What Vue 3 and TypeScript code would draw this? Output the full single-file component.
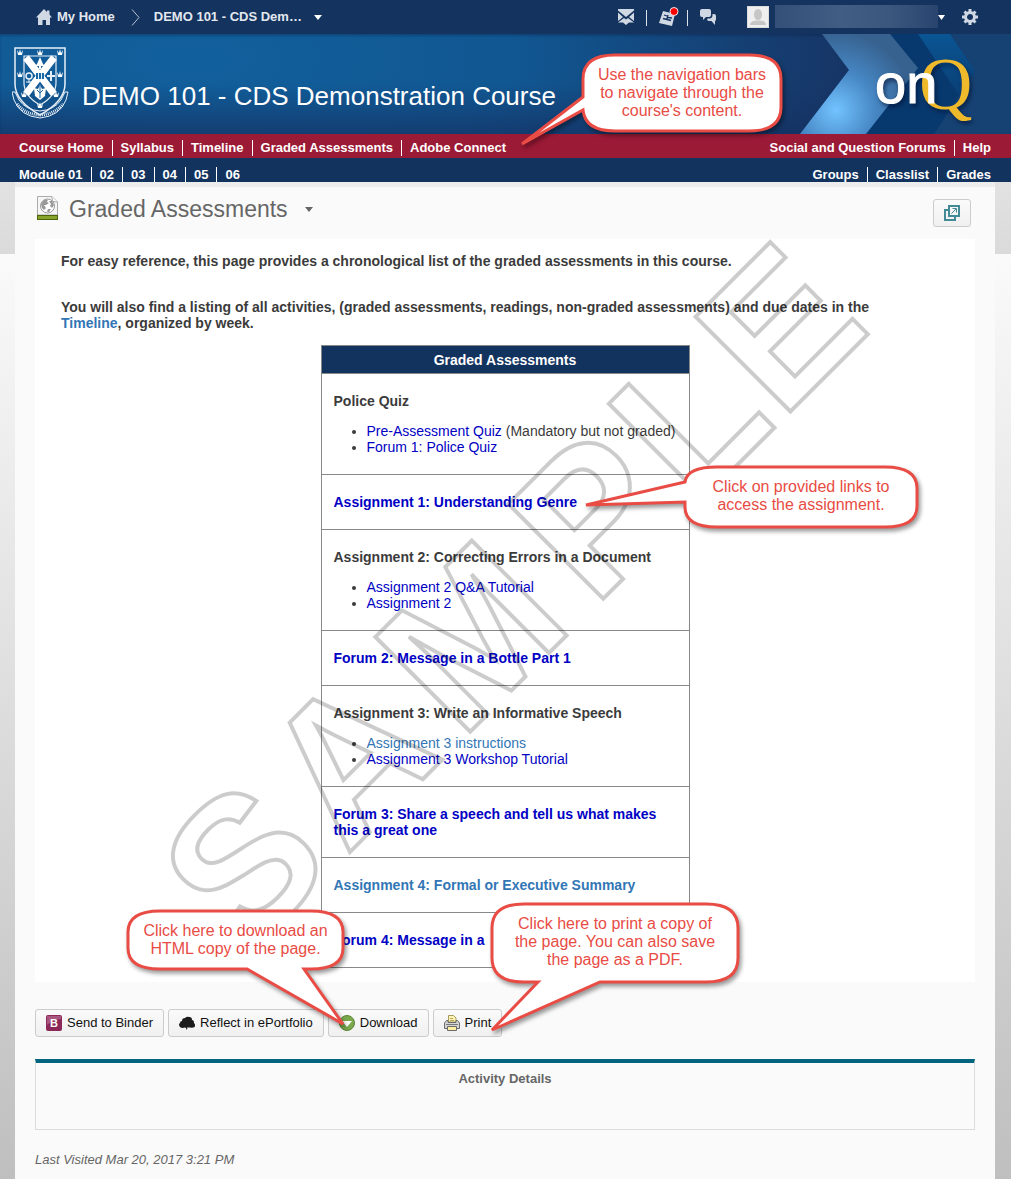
<script setup lang="ts">
interface ListEntry { label: string; tone?: string; note?: string }
interface Row { title: string; link?: string; items?: ListEntry[] }

const leftLinks: string[] = ['Course Home', 'Syllabus', 'Timeline', 'Graded Assessments', 'Adobe Connect']
const rightLinks: string[] = ['Social and Question Forums', 'Help']
const moduleLinks: string[] = ['Module 01', '02', '03', '04', '05', '06']
const toolLinks: string[] = ['Groups', 'Classlist', 'Grades']

const rows: Row[] = [
  {
    title: 'Police Quiz',
    items: [
      { label: 'Pre-Assessment Quiz', tone: 'navy', note: '(Mandatory but not graded)' },
      { label: 'Forum 1: Police Quiz', tone: 'navy' },
    ],
  },
  { title: 'Assignment 1: Understanding Genre', link: 'navy' },
  {
    title: 'Assignment 2: Correcting Errors in a Document',
    items: [
      { label: 'Assignment 2 Q&A Tutorial', tone: 'navy' },
      { label: 'Assignment 2', tone: 'navy' },
    ],
  },
  { title: 'Forum 2: Message in a Bottle Part 1', link: 'navy' },
  {
    title: 'Assignment 3: Write an Informative Speech',
    items: [
      { label: 'Assignment 3 instructions', tone: 'sky' },
      { label: 'Assignment 3 Workshop Tutorial', tone: 'navy' },
    ],
  },
  { title: 'Forum 3: Share a speech and tell us what makes this a great one', link: 'navy' },
  { title: 'Assignment 4: Formal or Executive Summary', link: 'sky' },
  { title: 'Forum 4: Message in a', link: 'navy' },
]
</script>

<template>
  <div class="page">
    <header>
      <div class="topbar">
        <a class="home" href="#">
          <svg width="16" height="16" viewBox="0 0 16 16" aria-hidden="true">
            <path fill="#d0d8e3" d="M8 0 L11 3 V1.500 H13.500 V5.500 L16 8.500 H14 V16 H10 V11 H6.500 V16 H2 V8.500 H0 Z" />
          </svg>
          <span>My Home</span>
        </a>
        <svg class="crumb" width="9" height="17" viewBox="0 0 9 17" aria-hidden="true">
          <path d="M1 .5 L8 8.500 L1 16.500" fill="none" stroke="#b4c0d0" />
        </svg>
        <button class="course-pick" type="button">
          <span>DEMO 101 - CDS Dem…</span>
          <svg width="8" height="5" viewBox="0 0 8 5" aria-hidden="true"><path d="M0 0H8L4 5Z" fill="#fff" /></svg>
        </button>
        <div class="alerts">
          <button type="button" aria-label="Messages">
            <svg width="16" height="16" viewBox="0 0 16 16">
              <path fill="#d0d8e3" d="M0 0H16V1.500L8 8 0 1.500Z M0 3.500 5 8 0 12Z M16 3.500 11 8 16 12Z M0 13.500 6 9 8 10.500 10 9 16 13.500H11L8 16 5 13.500Z" />
            </svg>
          </button>
          <i class="rule"></i>
          <button type="button" aria-label="Updates" class="updates">
            <svg width="20" height="20" viewBox="0 0 20 20">
              <path fill="#d0d8e3" d="M4 4 L16 7 L13 19 L0 16 Z" />
              <path fill="none" stroke="#14335f" stroke-width="1.300" d="M5 8 8 9 M4 11.500 12 13.500 M9 8 8 12 M9 10.500 13 11" />
              <circle cx="15" cy="4.500" r="4" fill="#f00" stroke="#e8edf3" />
            </svg>
          </button>
          <i class="rule"></i>
          <button type="button" aria-label="Discussions">
            <svg width="16" height="16" viewBox="0 0 16 16">
              <path fill="#d0d8e3" d="M2 0H9Q11 0 11 2V6Q11 8 9 8H6L3 11V8H2Q0 8 0 6V2Q0 0 2 0Z M12.500 5H14Q16 5 16 7V10Q16 12 15 12V16L11.500 12H9Q7 12 7 10L8 9.500H10Q12.500 9 12.500 6Z" />
            </svg>
          </button>
        </div>
        <button class="user" type="button" aria-label="Account">
          <svg width="22" height="22" viewBox="0 0 22 22">
            <rect x=".5" y=".5" width="21" height="21" fill="#efefef" stroke="#dcdcdc" />
            <ellipse cx="11" cy="8.500" rx="4" ry="5.500" fill="#c6c6c6" />
            <path fill="#c6c6c6" d="M3 19Q3 15 9 14.500H13Q19 15 19 19Z" />
          </svg>
          <span class="name"></span>
          <svg width="7" height="5" viewBox="0 0 7 5"><path d="M0 0H7L3.500 5Z" fill="#fff" /></svg>
        </button>
        <button class="gear" type="button" aria-label="Settings">
          <svg width="16" height="16" viewBox="0 0 16 16">
            <circle cx="8" cy="8" r="4.500" fill="none" stroke="#d0d8e3" stroke-width="3" />
            <path stroke="#d0d8e3" stroke-width="3" d="M8 0V3M8 13V16M0 8H3M13 8H16M2.500 2.500 4.500 4.500M11.500 11.500 13.500 13.500M13.500 2.500 11.500 4.500M4.500 11.500 2.500 13.500" />
          </svg>
        </button>
      </div>

      <div class="banner">
        <svg class="crest" width="58" height="74" viewBox="0 0 58 74" aria-hidden="true">
          <g fill="none" stroke="#e6eff8">
            <path stroke-width="1.500" d="M3 2H53V38Q53 55 28 69Q3 55 3 38Z" />
            <path stroke-width="1.200" d="M12 10H44V37Q44 50 28 59Q12 50 12 37Z" />
            <path d="M3 46 H0 L2 54 Q8 70 28 72 Q48 70 54 54 L56 46 H53 M3 46 L7 54 Q14 64 28 65 Q42 64 49 54 L53 46" />
            <path stroke-width="3" stroke-dasharray="1 1" d="M5 58Q13 68 28 69Q43 68 51 58" />
            <circle cx="17" cy="30" r="3" stroke-width="1.500" />
            <path stroke-width="2" d="M39 25V35M35 30H43" />
            <path d="M17 33V37M14 36H20" />
          </g>
          <path stroke="#fff" stroke-width="7" d="M14 11.500 42 48M42 11.500 14 48" />
          <path fill="#1768a8" d="M24 27H32V33H24Z" />
          <path fill="none" stroke="#e6eff8" d="M26.500 27V33M29.500 27V33" />
          <g fill="#fff">
            <path d="M28 11 31 18 33 20H29V23H27V20H23L25 18Z" />
            <path d="M28 39 30 43 34 42 33 50 28 54 23 50 22 42 26 43Z" />
            <path d="M5 4 7 7 8 3 9 7 11 4 10 9H6Z M25 4 27 7 28 3 29 7 31 4 30 9H26Z M45 4 47 7 48 3 49 7 51 4 50 9H46Z" />
            <path d="M5 26 7 29 8 25 9 29 11 26 10 31H6Z M45 26 47 29 48 25 49 29 51 26 50 31H46Z" />
            <path d="M9 46 11 49 12 45 13 49 15 46 14 51H10Z M41 46 43 49 44 45 45 49 47 46 46 51H42Z M25 57 27 60 28 56 29 60 31 57 30 62H26Z" />
          </g>
          <path stroke="#1768a8" fill="none" d="M28 40V52M25 44 28 47 31 44" />
        </svg>
        <h1>DEMO 101 - CDS Demonstration Course</h1>
        <svg class="brand" width="211" height="100" viewBox="0 0 211 100" role="img" aria-label="onQ">
          <defs>
            <radialGradient id="glow" gradientUnits="userSpaceOnUse" cx="36" cy="76" r="78">
              <stop offset="0" stop-color="#72c3ff" /><stop offset=".5" stop-color="#4687c4" /><stop offset="1" stop-color="#376290" />
            </radialGradient>
            <linearGradient id="edge" x1="0" y1="0" x2="0" y2="1">
              <stop offset="0" stop-color="#0a5594" /><stop offset="1" stop-color="#0a3f75" />
            </linearGradient>
          </defs>
          <path fill="#164273" d="M120 0H211V100H120Z" />
          <path fill="#08396e" d="M90 0H150L175 37 134 100H66Z" />
          <path fill="url(#edge)" d="M118 0H150L175 37 159 61Z" />
          <path fill="url(#glow)" d="M22 0H90L118 34 66 100H0L49 36Z" />
          <g class="shade">
            <text class="q" x="119" y="75">Q</text>
            <text class="on" x="75" y="69">on</text>
          </g>
        </svg>
      </div>

      <nav class="nav red" aria-label="Course">
        <ul><li v-for="l in leftLinks" :key="l"><a href="#">{{ l }}</a></li></ul>
        <ul><li v-for="l in rightLinks" :key="l"><a href="#">{{ l }}</a></li></ul>
      </nav>
      <nav class="nav blue" aria-label="Modules">
        <ul><li v-for="l in moduleLinks" :key="l"><a href="#">{{ l }}</a></li></ul>
        <ul><li v-for="l in toolLinks" :key="l"><a href="#">{{ l }}</a></li></ul>
      </nav>
    </header>

    <div class="backdrop">
      <main>
        <div class="heading">
          <svg width="22" height="26" viewBox="0 0 22 26" aria-hidden="true">
            <path d="M.5 .5H15L20.500 6V19H.5Z" fill="#f6f6f6" stroke="#aaa" />
            <path d="M14.500 .5 16 5.500 20.500 6" fill="#fff" stroke="#aaa" />
            <circle cx="10.500" cy="10" r="7" fill="#fff" stroke="#999" />
            <path fill="#999" d="M4 8 7 4 11 3.500 10 6 12 7 9 9 7 9 9 12 7 14 5 12Z M12 5 15 5 17 9 15 12 13 10 14 8Z M11 13 14 13 12 16 10 16Z" />
            <rect x=".5" y="19.500" width="20" height="4" fill="#86a32c" stroke="#4c6609" />
          </svg>
          <h2>Graded Assessments</h2>
          <svg width="8" height="5" viewBox="0 0 8 5" aria-hidden="true"><path d="M0 0H8L4 5Z" fill="#666" /></svg>
          <button class="btn popout" type="button" aria-label="Open in new window">
            <svg width="16" height="16" viewBox="0 0 16 16">
              <path fill="none" stroke="#438a97" stroke-width="2" d="M5 1H15V11H5Z M4 5H1V15H11V12" />
              <path fill="none" stroke="#438a97" d="M7.500 8.500 12 4M8.500 3.500H12.500V7.500" />
            </svg>
          </button>
        </div>

        <section class="content">
          <p>For easy reference, this page provides a chronological list of the graded assessments in this course.</p>
          <p class="second">You will also find a listing of all activities, (graded assessments, readings, non-graded assessments) and due dates in the <a class="sky" href="#">Timeline</a>, organized by week.</p>
          <table>
            <thead><tr><th scope="col">Graded Assessments</th></tr></thead>
            <tbody>
              <tr v-for="r in rows" :key="r.title">
                <td>
                  <strong><a v-if="r.link" href="#" :class="r.link">{{ r.title }}</a><template v-else>{{ r.title }}</template></strong>
                  <ul v-if="r.items">
                    <li v-for="i in r.items" :key="i.label"><a href="#" :class="i.tone">{{ i.label }}</a>{{ i.note ? ' ' + i.note : '' }}</li>
                  </ul>
                </td>
              </tr>
            </tbody>
          </table>
        </section>

        <div class="actions">
          <button class="btn" type="button">
            <svg width="16" height="16" viewBox="0 0 16 16" aria-hidden="true">
              <rect width="16" height="16" rx="2" fill="#8b2858" /><path fill="#a85780" d="M1 1H15V4Q7 4 1 10Z" />
              <text class="b" x="8" y="12" text-anchor="middle">B</text>
            </svg><span>Send to Binder</span>
          </button>
          <button class="btn" type="button">
            <svg width="16" height="16" viewBox="0 0 16 16" aria-hidden="true">
              <path fill="#1b1b1b" d="M3 6Q3 3 6 3Q8 1 10.500 2Q13 2 13 5Q15 5 15 8Q17 10 15.500 12Q14 13 11 12.500L8 12.500Q9 14 7 15Q8 13 6 12.500Q3 13.500 1 12Q-1 9 1 8Q1 6 3 6Z" />
            </svg><span>Reflect in ePortfolio</span>
          </button>
          <button class="btn" type="button">
            <svg width="16" height="16" viewBox="0 0 16 16" aria-hidden="true">
              <circle cx="8" cy="8" r="7.500" fill="#79a94c" stroke="#5c8537" /><path fill="#fff" d="M3 6H13L8 12Z" />
            </svg><span>Download</span>
          </button>
          <button class="btn" type="button">
            <svg width="16" height="16" viewBox="0 0 16 16" aria-hidden="true">
              <path fill="#fdf3b4" stroke="#a89a5c" d="M4.500 7V.5H9.500L12 3V7Z" /><path stroke="#b7a85e" d="M6 3.500H9M6 5.500H10" />
              <path fill="#d6d6d6" stroke="#6b6b6b" d="M2.500 5.500H4V7.500H12V5.500H13.500L15.500 8V13.500H.5V8Z" />
              <path stroke="#777" d="M2 9.500H14" /><path fill="#fdf0a0" stroke="#6b6b6b" d="M3.500 11.500H12.500V15.500H3.500Z" />
            </svg><span>Print</span>
          </button>
        </div>

        <section class="activity"><h3>Activity Details</h3></section>
        <p class="visited">Last Visited Mar 20, 2017 3:21 PM</p>
      </main>
    </div>

    <svg class="watermark" width="1011" height="1179" viewBox="0 0 1011 1179" aria-hidden="true">
      <text transform="rotate(-45)" x="-504 -360 -198 -10 132 255" y="850">SAMPLE</text>
    </svg>

    <aside class="callout c1">
      <svg width="202" height="80"><path d="M34 2H168Q200 2 200 26V54Q200 78 168 78H34Q4 78 2 57L-59 91 2 44V26Q2 2 34 2Z" /></svg>
      <p>Use the navigation bars<br>to navigate through the<br>course's content.</p>
    </aside>
    <aside class="callout c2">
      <svg width="236" height="64"><path d="M34 2H202Q234 2 234 23V41Q234 62 202 62H34Q2 62 2 42V37L-97 40 2 17Q4 2 34 2Z" /></svg>
      <p>Click on provided links to<br>access the assignment.</p>
    </aside>
    <aside class="callout c3">
      <svg width="219" height="62"><path d="M34 2H185Q217 2 217 23V39Q217 60 185 60H178L217 115 121 60H34Q2 60 2 39V23Q2 2 34 2Z" /></svg>
      <p>Click here to download an<br>HTML copy of the page.</p>
    </aside>
    <aside class="callout c4">
      <svg width="250" height="82"><path d="M34 2H216Q248 2 248 26V56Q248 80 216 80H110L2 128 48 80H34Q2 80 2 56V26Q2 2 34 2Z" /></svg>
      <p>Click here to print a copy of<br>the page. You can also save<br>the page as a PDF.</p>
    </aside>
  </div>
</template>

<style>
body { margin: 0; }
</style>

<style scoped>
.page {
  position: relative;
  overflow: hidden;
  font-family: "Liberation Sans", Arial, sans-serif;
  font-size: 13px;
  color: #3b3b3b;
}
a { text-decoration: none; color: inherit; }
ul { list-style: none; margin: 0; padding: 0; }
svg { display: block; flex: none; }
button { font: inherit; color: inherit; border: 0; background: none; padding: 0; cursor: pointer; }

.topbar {
  display: flex;
  align-items: center;
  height: 34px;
  padding: 0 33px 0 36px;
  background: #14335f;
  color: #e3e8ef;
  font-weight: bold;
}
.home { display: flex; align-items: center; gap: 5px; }
.crumb { margin: 0 14px 0 16px; }
.course-pick { display: flex; align-items: center; gap: 12px; }
.topbar span { padding-bottom: 1px; }
.alerts { display: flex; align-items: center; gap: 12px; margin-left: auto; }
.updates { margin-right: -4px; }
.rule { width: 1px; height: 16px; margin-top: 2px; background: #dde3ea; }
.user { display: flex; align-items: center; margin-left: 31px; }
.name { width: 163px; height: 22px; margin: 0 0 2px 6px; background: linear-gradient(90deg, #344f78, #425d84 40%, #3c577e 70%, #29456f); }
.gear { margin-left: 17px; }

.banner {
  display: flex;
  height: 100px;
  background:
    linear-gradient(180deg, transparent 50%, rgba(20, 50, 100, 0.700)),
    radial-gradient(ellipse 720px 260px at 190px 25px, #11609d, #115792 45%, #163a6c 85%, #162f5e);
  box-shadow: inset 0 2px 2px rgba(10, 30, 70, 0.300);
  color: #fff;
}
.crest { margin: 12px 0 0 12px; }
h1 { margin: 47px 0 0 12px; font-size: 26px; line-height: 30px; font-weight: normal; white-space: nowrap; }
.brand { margin-left: auto; }
.shade { filter: drop-shadow(2px 3px 2px rgba(0, 15, 50, 0.600)); }
.on { font: 56px "Liberation Sans", Arial, sans-serif; fill: #fff; stroke: #fff; stroke-width: 1px; }
.q { font: 74px "Liberation Serif", serif; fill: #efb92c; }

.nav { display: flex; justify-content: space-between; height: 24px; padding: 0 12px 0 11px; color: #fff; font-weight: bold; overflow: hidden; }
.nav ul { display: flex; padding-top: 6px; }
.nav.blue ul { padding-top: 9px; }
.nav li { height: 16px; line-height: 16px; padding: 0 8px; }
.nav li + li { border-left: 1px solid #fff; }
.nav.red { background: #9b1a36; }
.nav.blue { background: #13335f; }

.backdrop {
  padding: 0 16px 0 15px;
  background:
    linear-gradient(#e2e2e2, #dadada) 0 0 / 100% 72px no-repeat,
    linear-gradient(#fafafa 72px, #bfbfbf);
}
main { padding: 8px 20px 11px; background: #fafafa; border-top: 5px solid #ededed; }
.heading { display: flex; align-items: center; height: 28px; padding: 0 4px 16px 2px; }
h2 { margin: 0 17px 0 10px; font-size: 23px; line-height: 28px; font-weight: normal; color: #666; }
.btn {
  display: flex;
  align-items: center;
  gap: 5px;
  height: 28px;
  padding: 0 10px;
  border: 1px solid #ccc;
  border-radius: 3px;
  background: linear-gradient(#fafafa, #f0f0f0);
  color: #111;
}
.btn span { padding-bottom: 2px; }
.popout { margin: 8px 0 0 auto; }

.content { background: #fff; padding: 14px 26px; font-size: 14px; line-height: 16px; }
.content p { margin: 0 32px 0 0; font-weight: bold; }
.content .second { margin-top: 30px; }
.navy { color: #0101c4; }
.sky { color: #3276b5; }
table { width: 369px; margin: 14px auto 0; border-collapse: collapse; }
th, td { border: 1px solid #888; text-align: left; font-weight: normal; }
th { height: 27px; padding: 0; background: #13335f; color: #fff; text-align: center; font-weight: bold; }
td { padding: 19px 12px; }
td strong { display: block; }
td ul { list-style: disc; margin: 14px -10px 0 0; padding-left: 33px; white-space: nowrap; }

.actions { display: flex; gap: 4px; margin-top: 27px; }
.b { font: bold 11px "Liberation Sans", Arial, sans-serif; fill: #fff; }
.activity { box-sizing: border-box; height: 71px; margin-top: 22px; border: 1px solid #dcdcdc; border-top: 4px solid #00657f; }
h3 { margin: 8px 0 0; font-size: 13px; line-height: 16px; text-align: center; color: #666; }
.visited { margin: 22px 0 0; font-style: italic; line-height: 16px; color: #666; }

.watermark { position: absolute; left: 0; top: 0; pointer-events: none; }
.watermark text { font: bold 195px "Liberation Sans", Arial, sans-serif; fill: none; stroke: #000; stroke-opacity: 0.200; stroke-width: 4px; }

.callout { position: absolute; display: grid; color: #e84c45; font-size: 16px; line-height: 18px; text-align: center; }
.callout svg { overflow: visible; grid-area: 1 / 1; filter: drop-shadow(2px 3px 2px rgba(0, 0, 0, 0.400)); }
.callout path { fill: #fff; stroke: #e84c45; stroke-width: 3px; }
.callout p { grid-area: 1 / 1; position: relative; margin: 13px 0 0; white-space: nowrap; }
.c1 { left: 581px; top: 53px; }
.c2 { left: 683px; top: 465px; }
.c3 { left: 126px; top: 909px; }
.c4 { left: 490px; top: 902px; }
</style>
